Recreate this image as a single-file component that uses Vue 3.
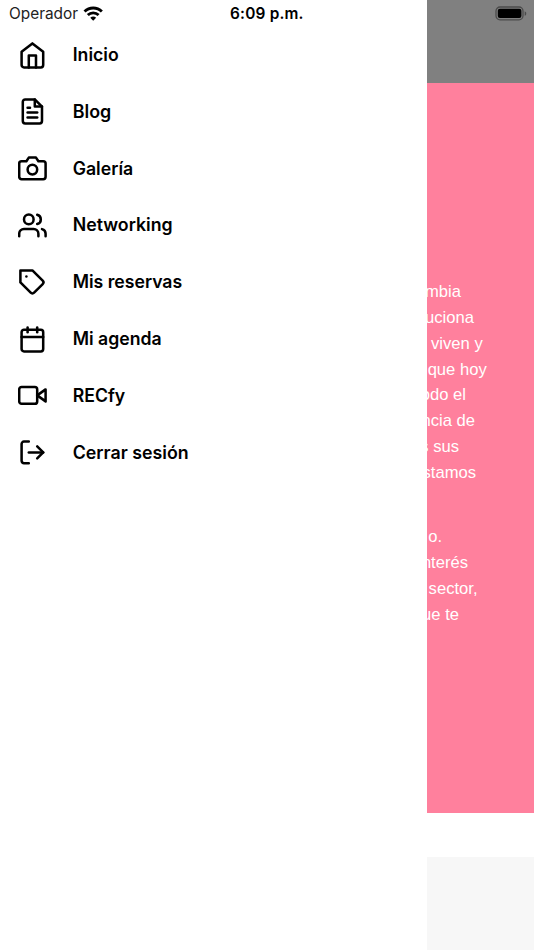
<script setup>
import { ref } from 'vue'

const active = ref('')

const items = [
  { id: 'home', text: 'Inicio', width: 46, paths: ['M3 9l9-7 9 7v11a2 2 0 0 1-2 2H5a2 2 0 0 1-2-2z', 'M9 22V12h6v10'] },
  { id: 'blog', text: 'Blog', width: 38.5, paths: ['M14 2H6a2 2 0 0 0-2 2v16a2 2 0 0 0 2 2h12a2 2 0 0 0 2-2V8z', 'M14 2v6h6', 'M16 13H8', 'M16 17H8', 'M10 9H8'] },
  { id: 'gallery', text: 'Galería', width: 60.5, paths: ['M23 19a2 2 0 0 1-2 2H3a2 2 0 0 1-2-2V8a2 2 0 0 1 2-2h4l2-3h6l2 3h4a2 2 0 0 1 2 2z', 'M16 13a4 4 0 1 1-8 0 4 4 0 0 1 8 0z'] },
  { id: 'networking', text: 'Networking', width: 100, paths: ['M17 21v-2a4 4 0 0 0-4-4H5a4 4 0 0 0-4 4v2', 'M13 7a4 4 0 1 1-8 0 4 4 0 0 1 8 0z', 'M23 21v-2a4 4 0 0 0-3-3.87', 'M16 3.13a4 4 0 0 1 0 7.75'] },
  { id: 'bookings', text: 'Mis reservas', width: 109.5, paths: ['M20.59 13.41l-7.17 7.17a2 2 0 0 1-2.83 0L2 12V2h10l8.59 8.59a2 2 0 0 1 0 2.82z', 'M7 7h.01'] },
  { id: 'agenda', text: 'Mi agenda', width: 89, paths: ['M5 4h14a2 2 0 0 1 2 2v14a2 2 0 0 1-2 2H5a2 2 0 0 1-2-2V6a2 2 0 0 1 2-2z', 'M16 2v4', 'M8 2v4', 'M3 10h18'] },
  { id: 'recfy', text: 'RECfy', width: 52.5, paths: ['M23 7l-7 5 7 5V7z', 'M3 5h11a2 2 0 0 1 2 2v10a2 2 0 0 1-2 2H3a2 2 0 0 1-2-2V7a2 2 0 0 1 2-2z'] },
  { id: 'logout', text: 'Cerrar sesión', width: 116, paths: ['M9 21H5a2 2 0 0 1-2-2V5a2 2 0 0 1 2-2h4', 'M16 17l5-5-5-5', 'M21 12H9'] },
]

// Lines run under the drawer, end = where each one stops
const paragraphs = [
  [
    { text: 'mbia', end: 34 },
    { text: 'uciona', end: 47 },
    { text: 'viven y', end: 55.7 },
    { text: 'que hoy', end: 59.7 },
    { text: 'odo el', end: 39 },
    { text: 'ncia de', end: 48 },
    { text: 's sus', end: 32 },
    { text: 'stamos', end: 49 },
  ],
  [
    { text: 'o.', end: 15 },
    { text: 'nterés', end: 41 },
    { text: 'sector,', end: 50.5 },
    { text: 'ue te', end: 32 },
  ],
]
</script>

<template>
  <div class="screen">
    <aside class="drawer">
      <header class="status">
        <div class="carrier">
          <span class="carrier-name">Operador</span>
          <svg class="wifi" viewBox="0 0 20 15">
            <path d="M1.5 5.4a12.2 12.2 0 0 1 17 0" />
            <path d="M4.7 8.8a7.7 7.7 0 0 1 10.6 0" />
            <path class="wifi-dot" d="M7.1 11.5a4.3 4.3 0 0 1 5.8 0L10 14.5z" />
          </svg>
        </div>
        <span class="time">6:09 p.m.</span>
      </header>

      <nav class="menu">
        <a
            v-for="item in items"
            :key="item.id"
            class="item"
            :aria-current="active === item.id"
            @click="active = item.id"
        >
          <svg class="item-ic" viewBox="0 0 24 24">
            <path v-for="d in item.paths" :key="d" :d="d" />
          </svg>
          <svg class="item-lbl" height="24" :width="item.width + 4">
            <text x=".7" y="18" :textLength="item.width" lengthAdjust="spacingAndGlyphs">{{ item.text }}</text>
          </svg>
        </a>
      </nav>
    </aside>

    <main class="page">
      <div class="page-top">
        <svg class="battery" viewBox="0 0 32 16">
          <rect x="1" y="1" width="27" height="12.8" rx="4" class="battery-case" />
          <rect x="2.8" y="2.7" width="23.6" height="9.4" rx="2" />
          <path d="M29.7 5.2c2.1.8 2.1 3.8 0 4.6z" class="battery-tip" />
        </svg>
      </div>
      <section class="about">
        <div v-for="(lines, q) in paragraphs" :key="q" class="par">
          <div v-for="line in lines" :key="line.text" class="line" :style="{ width: line.end + 'px' }">
            <span>{{ line.text }}</span>
          </div>
        </div>
      </section>
      <div class="page-card" />
    </main>
  </div>
</template>

<style>
body {
  margin: 0;
  background-color: #fff;
}
</style>

<style scoped>
* { box-sizing: border-box; }

.screen {
  display: grid;
  grid-template-columns: 427px 1fr;
  height: 950px;
  overflow: hidden;
  font-family: Inter, 'Liberation Sans', sans-serif;
  color: #000;
}
.status {
  display: grid;
  grid-template-columns: 230px auto;
  align-items: center;
  height: 26.6px;
  font-size: 15.4px;
  line-height: 27px;
}
.carrier {
  display: flex;
  align-items: center;
  padding-left: 9px;
  color: #222;
}
.carrier-name { width: 74px; }
.wifi {
  width: 20.4px;
  height: 15.3px;
  fill: none;
  stroke: #000;
  stroke-width: 2.8;
}
.wifi-dot {
  fill: #000;
  stroke: none;
}
.time {
  font-weight: 600;
  letter-spacing: .2px;
}

.menu {
  display: flex;
  flex-direction: column;
}
.item {
  display: flex;
  align-items: center;
  gap: 25.3px;
  height: 56.8px;
  padding-left: 18.2px;
  cursor: pointer;
}
.item-ic {
  width: 28.8px;
  height: 28.8px;
  fill: none;
  stroke: #000;
  stroke-width: 2.1;
  stroke-linecap: round;
  stroke-linejoin: round;
}
.item-lbl {
  font-size: 18px;
  font-weight: 600;
}

.page {
  display: flex;
  flex-direction: column;
  overflow: hidden;
}
.page-top {
  display: flex;
  justify-content: flex-end;
  height: 83px;
  padding: 6px 7px 0 0;
  background-color: #808080;
}
.battery {
  width: 32px;
  height: 16px;
}
.battery-case {
  fill: none;
  stroke: #4b4b4b;
  stroke-width: 1.3;
}
.battery-tip { fill: #4b4b4b; }
.about {
  height: 730px;
  padding-top: 196.3px;
  background-color: #ff809d;
  color: #fff;
  font-family: 'Liberation Sans', sans-serif;
  font-size: 16.6px;
  line-height: 25.8px;
}
.par + .par { margin-top: 38.7px; }
.line {
  display: flex;
  justify-content: flex-end;
  white-space: nowrap;
}
.page-card {
  flex: 1;
  margin-top: 44px;
  background-color: #f7f7f7;
}
</style>
